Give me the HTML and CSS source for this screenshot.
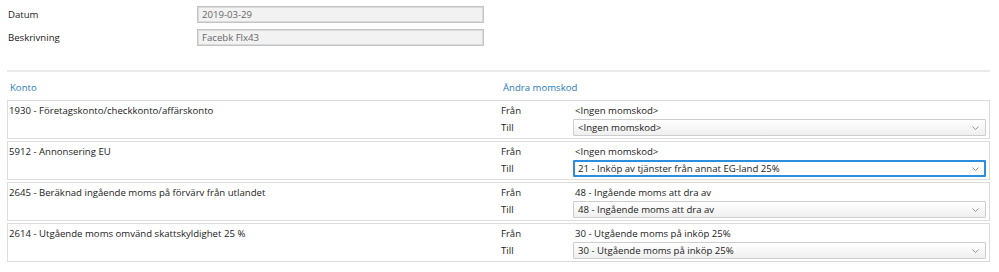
FILE: index.html
```html
<!DOCTYPE html>
<html>
<head>
<meta charset="utf-8">
<link rel="stylesheet" href="styles.css">
</head>
<body>
<div class="page">
  <div class="field">
    <div class="field-label">Datum</div>
    <div class="field-input">2019-03-29</div>
  </div>
  <div class="field">
    <div class="field-label">Beskrivning</div>
    <div class="field-input">Facebk Flx43</div>
  </div>
  <div class="divider"></div>
  <div class="head">
    <div class="head-left">Konto</div>
    <div class="head-right">Ändra momskod</div>
  </div>
  <div class="row">
    <div class="acct">1930 - Företagskonto/checkkonto/affärskonto</div>
    <div class="codes">
      <div class="line"><span class="lbl">Från</span><span class="val">&lt;Ingen momskod&gt;</span></div>
      <div class="line sel-line"><span class="lbl">Till</span><div class="sel"><span>&lt;Ingen momskod&gt;</span><svg class="chev" viewBox="0 0 7 4" width="7" height="4"><path d="M0.5 0.5 L3.5 3.5 L6.5 0.5" fill="none" stroke="#8a8a8a" stroke-width="0.9"/></svg></div></div>
    </div>
  </div>
  <div class="row">
    <div class="acct">5912 - Annonsering EU</div>
    <div class="codes">
      <div class="line"><span class="lbl">Från</span><span class="val">&lt;Ingen momskod&gt;</span></div>
      <div class="line sel-line"><span class="lbl">Till</span><div class="sel focus"><span>21 - Inköp av tjänster från annat EG-land 25%</span><svg class="chev" viewBox="0 0 7 4" width="7" height="4"><path d="M0.5 0.5 L3.5 3.5 L6.5 0.5" fill="none" stroke="#8a8a8a" stroke-width="0.9"/></svg></div></div>
    </div>
  </div>
  <div class="row">
    <div class="acct">2645 - Beräknad ingående moms på förvärv från utlandet</div>
    <div class="codes">
      <div class="line"><span class="lbl">Från</span><span class="val">48 - Ingående moms att dra av</span></div>
      <div class="line sel-line"><span class="lbl">Till</span><div class="sel"><span>48 - Ingående moms att dra av</span><svg class="chev" viewBox="0 0 7 4" width="7" height="4"><path d="M0.5 0.5 L3.5 3.5 L6.5 0.5" fill="none" stroke="#8a8a8a" stroke-width="0.9"/></svg></div></div>
    </div>
  </div>
  <div class="row">
    <div class="acct">2614 - Utgående moms omvänd skattskyldighet 25 %</div>
    <div class="codes">
      <div class="line"><span class="lbl">Från</span><span class="val">30 - Utgående moms på inköp 25%</span></div>
      <div class="line sel-line"><span class="lbl">Till</span><div class="sel"><span>30 - Utgående moms på inköp 25%</span><svg class="chev" viewBox="0 0 7 4" width="7" height="4"><path d="M0.5 0.5 L3.5 3.5 L6.5 0.5" fill="none" stroke="#8a8a8a" stroke-width="0.9"/></svg></div></div>
    </div>
  </div>
</div>
</body>
</html>
```

FILE: styles.css
```css
html, body {
  margin: 0;
  padding: 0;
  background: #fff;
}
body {
  font-family: "Open Sans", "Noto Sans", sans-serif;
  font-size: 9.6px;
  color: #222;
}
.page {
  padding: 6px 9px 0 8px;
}
.field {
  display: flex;
  align-items: center;
  height: 17px;
  margin-bottom: 6px;
}
.field-label {
  width: 189px;
  line-height: 17px;
}
.field-input {
  box-sizing: border-box;
  width: 287px;
  height: 17px;
  line-height: 15px;
  padding: 0 4px;
  border: 1px solid #c4c4c4;
  box-shadow: inset 0 0 0 1px #dadada;
  background: #f2f2f2;
  color: #666;
}
.divider {
  height: 2px;
  background: #ebebeb;
  margin: 24px 0 0 -1px;
}
.head {
  display: flex;
  margin-top: 8px;
  margin-bottom: 4px;
  line-height: 16px;
  color: #2a7bbf;
}
.head-left {
  width: 490px;
  padding-left: 2px;
}
.head-right {
  padding-left: 3px;
}
.row {
  display: flex;
  box-sizing: border-box;
  height: 39px;
  border: 1px solid #dcdcdc;
  margin: 0 0 2px -1px;
}
.acct {
  width: 489px;
  padding: 2px 0 0 1px;
  line-height: 16px;
}
.codes {
  flex: 1;
  padding: 2px 3px 0 3px;
}
.line {
  display: flex;
  align-items: center;
  height: 16px;
  line-height: 16px;
}
.line.sel-line {
  height: 17px;
}
.lbl {
  width: 72px;
  flex: none;
}
.val {
  padding-left: 2px;
}
.sel {
  box-sizing: border-box;
  flex: 1;
  height: 17px;
  display: flex;
  align-items: center;
  justify-content: space-between;
  padding: 0 6px 0 4px;
  border: 1px solid #cdcdcd;
  background: linear-gradient(#ffffff, #efefef);
  border-radius: 1px;
}
.sel.focus {
  border: 2px solid #2b8fdd;
  padding: 0 5px 0 3px;
  background: #fff;
}
.chev {
  flex: none;
}
```
